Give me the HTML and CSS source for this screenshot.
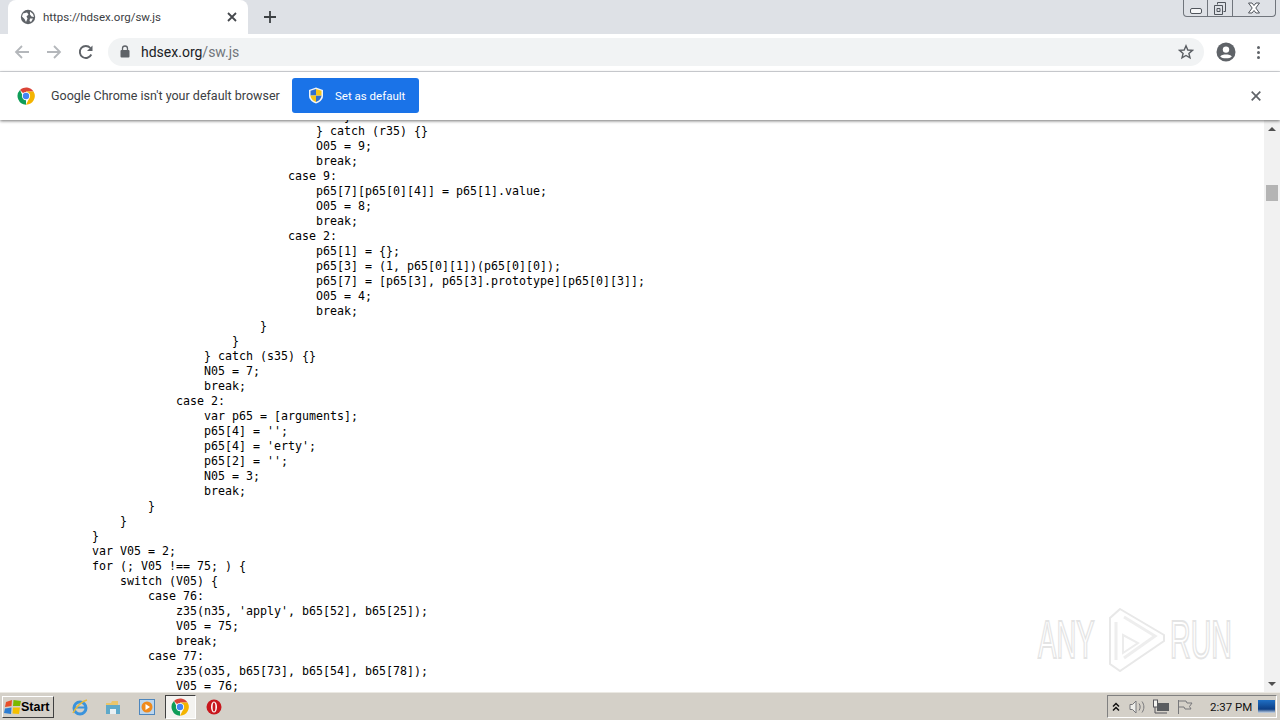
FILE: index.html
```html
<!DOCTYPE html>
<html lang="en">
<head>
    <meta charset="UTF-8">
    <meta name="viewport" content="width=device-width, initial-scale=1.0">
    <title>https://hdsex.org/sw.js</title>
    <link rel="stylesheet" href="styles.css">
</head>
<body>
    <div class="tab-strip">
        <div class="tab">
            <svg class="tab-globe" width="16" height="16" viewBox="0 0 16 16">
                <circle cx="8" cy="8" r="7.2" fill="#5f6368"/>
                <path d="M3 4.5 7 3.5 8.5 5.5 6.5 7.5 7.5 9.5 6 13 4.5 10 2 7.5ZM10 2.5 13 5 14 8 11.5 7.5 10 5.5ZM10 9.5 13 9.5 11 13 9.5 12Z" fill="#fff"/>
            </svg>
            <span class="tab-title">https://hdsex.org/sw.js</span>
            <svg class="tab-close" width="10" height="10" viewBox="0 0 10 10">
                <path d="M1 1 9 9M9 1 1 9" stroke="#45484d" stroke-width="1.8"/>
            </svg>
        </div>
        <svg class="new-tab" width="14" height="14" viewBox="0 0 14 14">
            <path d="M7 1V13M1 7H13" stroke="#3c4043" stroke-width="1.8"/>
        </svg>
        <div class="window-controls">
            <div class="win-btn win-min"><span class="min-glyph"></span></div>
            <div class="win-btn win-restore">
                <svg width="14" height="15" viewBox="0 0 14 15">
                    <path d="M4.5 3.5V1.5H12.5V10.5H10.5M1.5 4.5H9.5V13.5H1.5Z M4 7.5H7V10.5H4Z" fill="none" stroke="#50555c"/>
                </svg>
            </div>
            <div class="win-btn win-close">
                <svg width="14" height="12" viewBox="0 0 14 12">
                    <path d="M1.5 1 5 1 7 3.5 9 1 12.5 1 8.8 6 12.5 11 9 11 7 8.5 5 11 1.5 11 5.2 6Z" fill="#fff" stroke="#50555c"/>
                </svg>
            </div>
        </div>
    </div>

    <div class="toolbar">
        <svg class="nav-icon" width="16" height="16" viewBox="0 0 16 16">
            <path d="M15 8H2M8 2 2 8l6 6" fill="none" stroke="#b4b7bb" stroke-width="1.8"/>
        </svg>
        <svg class="nav-icon" width="16" height="16" viewBox="0 0 16 16">
            <path d="M1 8H14M8 2l6 6-6 6" fill="none" stroke="#b4b7bb" stroke-width="1.8"/>
        </svg>
        <svg class="nav-icon" width="16" height="16" viewBox="0 0 16 16">
            <path d="M13.3 10.5A6 6 0 1 1 12.4 4" fill="none" stroke="#5f6368" stroke-width="1.9"/>
            <path d="M14.5 1.5V7H9Z" fill="#5f6368"/>
        </svg>
        <div class="omnibox">
            <svg class="lock" width="10" height="13" viewBox="0 0 10 13">
                <path d="M2.5 5V3.5a2.5 2.5 0 0 1 5 0V5" fill="none" stroke="#5f6368" stroke-width="1.3"/>
                <rect x="0.5" y="5" width="9" height="7.5" rx="1" fill="#5f6368"/>
            </svg>
            <span class="url-host">hdsex.org</span><span class="url-path">/sw.js</span>
            <svg class="star" width="16" height="16" viewBox="0 0 16 16">
                <path d="M8 1.8 9.8 6 14.4 6.4 10.9 9.4 12 13.9 8 11.5 4 13.9 5.1 9.4 1.6 6.4 6.2 6Z" fill="none" stroke="#5a5e63" stroke-width="1.4"/>
            </svg>
        </div>
        <svg class="avatar" width="20" height="20" viewBox="0 0 20 20">
            <circle cx="10" cy="10" r="9.5" fill="#5f6368"/>
            <circle cx="10" cy="7.6" r="3.2" fill="#fff"/>
            <path d="M4.2 14.4C6 12 14 12 15.8 14.4 14 17 6 17 4.2 14.4Z" fill="#fff"/>
        </svg>
        <div class="menu-dots"><span></span><span></span><span></span></div>
    </div>

    <div class="infobar">
        <svg class="chrome-logo" width="18" height="18" viewBox="0 0 48 48">
            <path d="M24 24 8 8A23 23 0 0 1 44 12H24Z" fill="#db4437"/>
            <path d="M24 24 24 47A23 23 0 0 1 8 8L17 27Z" fill="#0f9d58"/>
            <path d="M24 47 33 29 24 12H44A23 23 0 0 1 24 47Z" fill="#f4b400"/>
            <circle cx="24" cy="24" r="11" fill="#fff"/>
            <circle cx="24" cy="24" r="8.5" fill="#4285f4"/>
        </svg>
        <span class="infobar-text">Google Chrome isn't your default browser</span>
        <button class="default-btn">
            <svg width="16" height="17" viewBox="0 0 16 17">
                <path d="M8 .5 15 3V9C15 13 11 15.5 8 16.5 5 15.5 1 13 1 9V3Z" fill="#f2f5f8"/>
                <path d="M8 2 8 8.5H2.5V3.8ZM8 8.5H13.5C13.3 12 10.5 14 8 15Z" fill="#2f6fd0"/>
                <path d="M8 2 13.5 3.8V8.5H8ZM8 8.5V15C5.5 14 2.7 12 2.5 8.5Z" fill="#f5c518"/>
            </svg>
            <span>Set as default</span>
        </button>
        <svg class="infobar-close" width="10" height="10" viewBox="0 0 10 10">
            <path d="M.7.7 9.3 9.3M9.3.7.7 9.3" stroke="#5f6368" stroke-width="1.7"/>
        </svg>
    </div>

    <div class="page">
        <div class="page-body">
<pre class="code">                                                }
                                            } catch (r35) {}
                                            O05 = 9;
                                            break;
                                        case 9:
                                            p65[7][p65[0][4]] = p65[1].value;
                                            O05 = 8;
                                            break;
                                        case 2:
                                            p65[1] = {};
                                            p65[3] = (1, p65[0][1])(p65[0][0]);
                                            p65[7] = [p65[3], p65[3].prototype][p65[0][3]];
                                            O05 = 4;
                                            break;
                                    }
                                }
                            } catch (s35) {}
                            N05 = 7;
                            break;
                        case 2:
                            var p65 = [arguments];
                            p65[4] = '';
                            p65[4] = 'erty';
                            p65[2] = '';
                            N05 = 3;
                            break;
                    }
                }
            }
            var V05 = 2;
            for (; V05 !== 75; ) {
                switch (V05) {
                    case 76:
                        z35(n35, 'apply', b65[52], b65[25]);
                        V05 = 75;
                        break;
                    case 77:
                        z35(o35, b65[73], b65[54], b65[78]);
                        V05 = 76;
</pre>
        </div>
        <div class="scrollbar">
            <div class="scroll-arrow"><span class="arrow-up"></span></div>
            <div class="scroll-track"><div class="scroll-thumb"></div></div>
            <div class="scroll-arrow"><span class="arrow-down"></span></div>
        </div>
        <div class="watermark">
            <span class="mark-any">ANY</span>
            <svg width="62" height="64" viewBox="0 0 62 64">
                <path d="M16 1 60 27V33L16 63 6 56V10Z" fill="none" stroke="#e8e8e8" stroke-width="2"/>
                <path d="M20 9 51 28 20 50M12 14V52" fill="none" stroke="#eeeeee" stroke-width="3"/>
                <path d="M19 27 34 35 19 45Z" fill="none" stroke="#ececec" stroke-width="2"/>
            </svg>
            <span class="mark-run">RUN</span>
        </div>
    </div>

    <div class="taskbar">
        <button class="start-btn">
            <svg width="18" height="16" viewBox="0 0 18 16">
                <path d="M2 3 8 1 7.5 7 1 8Z" fill="#e8502a"/>
                <path d="M9.5 1 17 2 16 7 9 7Z" fill="#7ab800"/>
                <path d="M1 9.5 7.5 8.5 7 15 0 14Z" fill="#2d7dd2"/>
                <path d="M9 8.5 16 8.5 15 15 8.5 14.5Z" fill="#f6c000"/>
            </svg>
            <span>Start</span>
        </button>
        <div class="quick-launch">
            <div class="task-icon">
                <svg width="18" height="18" viewBox="0 0 18 18">
                    <circle cx="9" cy="10" r="6" fill="none" stroke="#3a93dc" stroke-width="3"/>
                    <path d="M3 9.5H15" stroke="#3a93dc" stroke-width="2"/>
                    <path d="M2 15C5 9 11 3 16 2" fill="none" stroke="#e8b93a" stroke-width="1.5"/>
                </svg>
            </div>
            <div class="task-icon">
                <svg width="18" height="18" viewBox="0 0 18 18">
                    <path d="M2 5H7L8 3H14V8H2Z" fill="#eac56a"/>
                    <path d="M2 7H16V16H2Z" fill="#5fa9c9"/>
                    <path d="M6 11H12V16H6Z" fill="#e9f1f4"/>
                </svg>
            </div>
            <div class="task-icon">
                <svg width="18" height="18" viewBox="0 0 18 18">
                    <rect x="1.5" y="1.5" width="15" height="15" fill="#bcd6ee" stroke="#4d86bd"/>
                    <circle cx="9" cy="9" r="5.5" fill="#ef8a1d"/>
                    <path d="M7.5 6 12 9 7.5 12Z" fill="#fff"/>
                </svg>
            </div>
            <div class="task-icon task-active">
                <svg width="18" height="18" viewBox="0 0 48 48">
                    <path d="M24 24 8 8A23 23 0 0 1 44 12H24Z" fill="#db4437"/>
                    <path d="M24 24 24 47A23 23 0 0 1 8 8L17 27Z" fill="#0f9d58"/>
                    <path d="M24 47 33 29 24 12H44A23 23 0 0 1 24 47Z" fill="#f4b400"/>
                    <circle cx="24" cy="24" r="11" fill="#fff"/>
                    <circle cx="24" cy="24" r="8.5" fill="#4285f4"/>
                </svg>
            </div>
            <div class="task-icon">
                <svg width="18" height="18" viewBox="0 0 18 18">
                    <circle cx="9" cy="9" r="7.5" fill="#c8171d"/>
                    <ellipse cx="9" cy="9" rx="3" ry="5.5" fill="#fff"/>
                    <ellipse cx="9" cy="9" rx="1.4" ry="4.5" fill="#c8171d"/>
                </svg>
            </div>
        </div>
        <div class="tray">
            <svg class="tray-chevron" width="8" height="10" viewBox="0 0 8 10">
                <path d="M1 4.5 4 1.5 7 4.5M1 8.5 4 5.5 7 8.5" fill="none" stroke="#111" stroke-width="1.5"/>
            </svg>
            <svg class="tray-volume" width="18" height="16" viewBox="0 0 18 16">
                <path d="M2 5.5H4.5L8 2V14L4.5 10.5H2Z" fill="#eeeeea" stroke="#77777a"/>
                <path d="M11 4.5C12.5 6.5 12.5 9.5 11 11.5M14 2.5C16.5 6 16.5 10 14 13.5" fill="none" stroke="#77777a"/>
            </svg>
            <svg width="18" height="16" viewBox="0 0 18 16">
                <rect x="1.5" y="1" width="4" height="7" fill="#f4f4f0" stroke="#55555a"/>
                <rect x="5" y="4" width="12" height="8" fill="#5a5d60"/>
                <path d="M3 8V14H15" fill="none" stroke="#55555a"/>
            </svg>
            <svg width="18" height="16" viewBox="0 0 18 16">
                <path d="M2.5 1V15M3 2H10L11 4H16L13.5 7.5 15 10H9L8 8H3" fill="none" stroke="#77777a"/>
            </svg>
            <span class="clock">2:37 PM</span>
            <div class="show-desktop"></div>
        </div>
    </div>
</body>
</html>
```

FILE: styles.css
```css
* {
    box-sizing: border-box;
}
html, body {
    height: 100%;
}
body {
    margin: 0;
    display: flex;
    flex-direction: column;
    overflow: hidden;
    font-family: Roboto, Arial, sans-serif;
    background-color: #fff;
}
svg {
    display: block;
    flex: none;
}

/* chrome tabs */
.tab-strip {
    display: flex;
    align-items: center;
    height: 34px;
    background-color: #dee1e6;
}
.tab {
    display: flex;
    align-items: center;
    width: 240px;
    height: 34px;
    margin-left: 8px;
    padding: 0 11px 0 12px;
    background-color: #fff;
    border-radius: 8px 8px 0 0;
}
.tab-title {
    flex: 1;
    margin-left: 7px;
    font-size: 11.5px;
    color: #3c4043;
}
.new-tab {
    margin-left: 15px;
}
.window-controls {
    display: flex;
    align-self: flex-start;
    height: 17px;
    margin-left: auto;
    margin-right: 4px;
    border: 1px solid #70757c;
    border-top: none;
    border-radius: 0 0 4px 4px;
}
.win-btn {
    display: flex;
    align-items: center;
    justify-content: center;
    height: 16px;
}
.win-min {
    width: 24px;
    border-right: 1px solid #70757c;
}
.win-restore {
    width: 25px;
    border-right: 1px solid #70757c;
}
.win-close {
    width: 42px;
}
.min-glyph {
    display: block;
    width: 12px;
    height: 6px;
    margin-top: 6px;
    background-color: #f5f6f7;
    border: 1px solid #50555c;
    border-radius: 2px;
}

/* toolbar */
.toolbar {
    display: flex;
    align-items: center;
    height: 38px;
    padding: 0 0 1px 14px;
    background-color: #fff;
    border-bottom: 1px solid #dadce0;
}
.nav-icon {
    margin-right: 16px;
}
.omnibox {
    display: flex;
    align-items: center;
    width: 1096px;
    height: 28px;
    margin-left: -2px;
    padding: 0 10px 1px 12px;
    background-color: #f1f3f4;
    border-radius: 14px;
}
.url-host, .url-path {
    font-size: 14px;
    color: #202124;
}
.url-host {
    margin-left: 11px;
}
.url-path {
    color: #70757a;
}
.star {
    margin-left: auto;
}
.avatar {
    margin-left: 12px;
}
.menu-dots {
    display: flex;
    flex-direction: column;
    gap: 2px;
    margin-left: 21px;
}
.menu-dots span {
    display: block;
    width: 3px;
    height: 3px;
    background-color: #5f6368;
    border-radius: 50%;
}

/* default browser bar */
.infobar {
    display: flex;
    align-items: center;
    position: relative;
    z-index: 2;
    height: 48px;
    padding: 0 19px 1px 17px;
    background-color: #fff;
    box-shadow: 0 1px 3px rgba(0, 0, 0, 0.55);
}
.infobar-text {
    width: 228px;
    margin-left: 16px;
    font-size: 12.5px;
    white-space: nowrap;
    color: #3c4043;
}
.default-btn {
    display: flex;
    align-items: center;
    gap: 11px;
    width: 127px;
    height: 35px;
    margin-left: 13px;
    padding: 0 0 0 16px;
    font-family: inherit;
    font-size: 11.5px;
    color: #fff;
    background-color: #1a73e8;
    border: none;
    border-radius: 3px;
}
.infobar-close {
    margin-left: auto;
}

/* page content */
.page {
    display: flex;
    position: relative;
    flex: 1;
    min-height: 0;
}
.page-body {
    flex: 1;
    overflow: hidden;
    background-color: #fff;
}
.code {
    margin: -11px 0 0 8px;
    font-family: "DejaVu Sans Mono", monospace;
    font-size: 11.63px;
    line-height: 15px;
    color: #000;
}
.scrollbar {
    display: flex;
    flex-direction: column;
    width: 16px;
    background-color: #f1f1f1;
}
.scroll-arrow {
    display: flex;
    align-items: center;
    justify-content: center;
    height: 17px;
}
.arrow-up, .arrow-down {
    display: block;
    border-left: 4px solid transparent;
    border-right: 4px solid transparent;
}
.arrow-up {
    border-bottom: 4px solid #505050;
}
.arrow-down {
    border-top: 4px solid #505050;
}
.scroll-track {
    flex: 1;
    padding: 48px 2px 0;
}
.scroll-thumb {
    height: 16px;
    background-color: #b4b4b4;
}
.watermark {
    display: flex;
    align-items: center;
    position: absolute;
    left: 1038px;
    top: 488px;
    font-size: 53px;
    line-height: 64px;
    font-family: "Liberation Sans", Arial, sans-serif;
    color: #fff;
    -webkit-text-stroke: 2px #e4e4e4;
}
.watermark span {
    display: block;
    transform-origin: left center;
}
.mark-any {
    width: 57px;
    transform: scaleX(0.52);
}
.mark-run {
    width: 62px;
    transform: scaleX(0.54);
}
.watermark svg {
    margin: 0 4px 0 9px;
}

/* windows taskbar */
.taskbar {
    display: flex;
    align-items: center;
    height: 28px;
    padding: 0 3px 0 2px;
    background-color: #d4d0c8;
    border-top: 1px solid #ebe9e3;
}
.start-btn {
    display: flex;
    align-items: center;
    gap: 0;
    width: 52px;
    height: 22px;
    padding: 0 0 0 1px;
    font-family: "Liberation Sans", Arial, sans-serif;
    font-size: 12.5px;
    font-weight: bold;
    color: #000;
    background-color: #d4d0c8;
    border: 1px solid;
    border-color: #fff #404040 #404040 #fff;
}
.start-btn svg {
    margin-right: -1px;
}
.quick-launch {
    display: flex;
    align-items: center;
    margin-left: 9px;
}
.task-icon {
    display: flex;
    align-items: center;
    justify-content: center;
    width: 33.5px;
    height: 24px;
}
.task-active {
    width: 31px;
    margin: 0 1.25px;
    background-color: #f4f3f0;
    border: 1px solid;
    border-color: #404040 #fff #fff #404040;
}
.tray {
    display: flex;
    align-items: center;
    gap: 6px;
    width: 170px;
    height: 23px;
    margin-left: auto;
    padding: 0 1px 0 4px;
    border: 1px solid;
    border-color: #808080 #fff #fff #808080;
}
.tray-volume {
    margin-left: 2px;
}
.clock {
    flex: none;
    margin-left: 10px;
    font-size: 11.5px;
    white-space: nowrap;
    color: #111;
}
.show-desktop {
    width: 17px;
    height: 13px;
    margin-left: auto;
    background: linear-gradient(#1f6fc4, #0d3f86 70%, #c9d6e4);
}
```
